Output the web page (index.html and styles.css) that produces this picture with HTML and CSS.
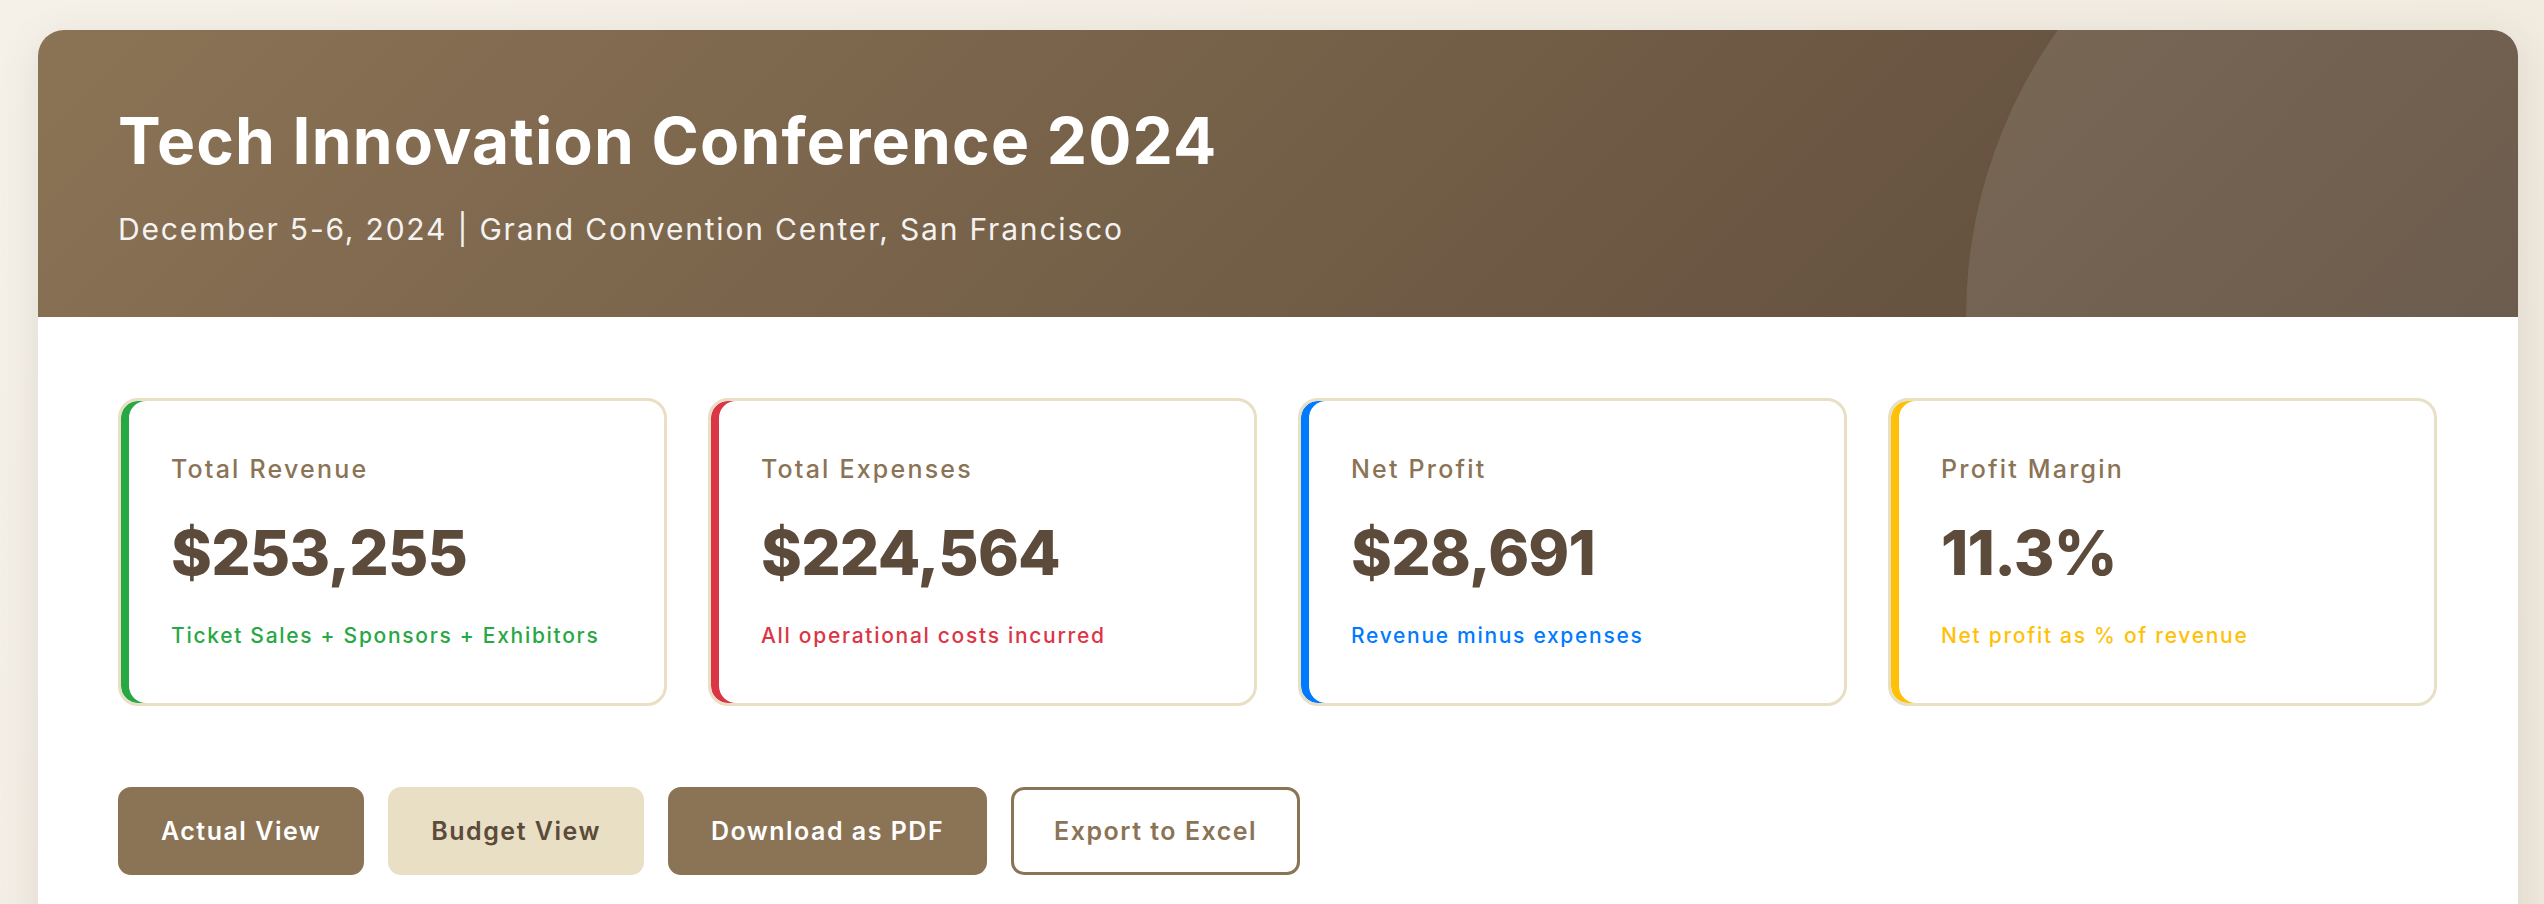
FILE: index.html
```html
<!DOCTYPE html>
<html lang="en">
<head>
    <meta charset="UTF-8">
    <meta name="viewport" content="width=device-width, initial-scale=1.0">
    <title>Tech Innovation Conference 2024 - Financial Report</title>
    <link rel="stylesheet" href="styles.css">
</head>
<body>
    <div class="container">
        <header class="header">
            <h1>Tech Innovation Conference 2024</h1>
            <p class="subtitle">December 5-6, 2024 | Grand Convention Center, San Francisco</p>
        </header>
        <main class="content">
            <div class="summary-cards">
                <div class="card revenue">
                    <div class="card-label">Total Revenue</div>
                    <div class="card-value">$253,255</div>
                    <div class="card-note">Ticket Sales + Sponsors + Exhibitors</div>
                </div>
                <div class="card expenses">
                    <div class="card-label">Total Expenses</div>
                    <div class="card-value">$224,564</div>
                    <div class="card-note">All operational costs incurred</div>
                </div>
                <div class="card profit">
                    <div class="card-label">Net Profit</div>
                    <div class="card-value">$28,691</div>
                    <div class="card-note">Revenue minus expenses</div>
                </div>
                <div class="card margin">
                    <div class="card-label">Profit Margin</div>
                    <div class="card-value">11.3%</div>
                    <div class="card-note">Net profit as % of revenue</div>
                </div>
            </div>
            <div class="actions">
                <button class="btn btn-primary">Actual View</button>
                <button class="btn btn-light">Budget View</button>
                <button class="btn btn-primary">Download as PDF</button>
                <button class="btn btn-outline">Export to Excel</button>
            </div>
        </main>
    </div>
</body>
</html>
```

FILE: styles.css
```css
* {
    box-sizing: border-box;
}
body {
    font-family: Inter, "Open Sans", sans-serif;
    background: linear-gradient(135deg, #f5f1e9 0%, #efe8dc 100%);
    margin: 0;
    padding: 30px 26px 0 38px;
    height: 904px;
    overflow: hidden;
}
.container {
    background: white;
    border-radius: 26px;
    box-shadow: 0 10px 40px rgba(92, 74, 58, 0.12);
    overflow: hidden;
    min-height: 1000px;
}
.header {
    position: relative;
    overflow: hidden;
    background: linear-gradient(135deg, #8b7355 0%, #5c4a3a 100%);
    color: white;
    padding: 63px 80px 65px;
}
.header::after {
    content: '';
    position: absolute;
    width: 988px;
    height: 988px;
    top: -207px;
    right: -436px;
    border-radius: 50%;
    background: rgba(255, 255, 255, 0.1);
}
.header h1 {
    margin: 0 0 18px;
    font-size: 64px;
    line-height: 96px;
    font-weight: 700;
    letter-spacing: 1.2px;
}
.subtitle {
    margin: 0;
    font-size: 30px;
    line-height: 45px;
    font-weight: 400;
    letter-spacing: 1.8px;
    opacity: 0.92;
}
.content {
    padding: 81px 81px 80px 80px;
}
.summary-cards {
    display: grid;
    grid-template-columns: repeat(4, 1fr);
    gap: 41px;
}
.card {
    border: 3px solid #e8dfc5;
    border-radius: 20px;
    padding: 50px 40px 52px 50px;
    background: white;
}
.card.revenue { box-shadow: inset 8px 0 0 #28a745; }
.card.expenses { box-shadow: inset 8px 0 0 #dc3545; }
.card.profit { box-shadow: inset 8px 0 0 #007bff; }
.card.margin { box-shadow: inset 8px 0 0 #ffc107; }
.card-label {
    color: #8b7355;
    font-size: 25px;
    line-height: 36px;
    font-weight: 500;
    letter-spacing: 2.2px;
    margin-bottom: 26px;
}
.card-value {
    color: #5c4a3a;
    font-size: 62px;
    line-height: 80px;
    font-weight: 800;
    letter-spacing: -0.8px;
    margin-bottom: 28px;
}
.card-note {
    font-size: 21px;
    line-height: 30px;
    font-weight: 500;
    letter-spacing: 1.7px;
}
.revenue .card-note { color: #28a745; }
.expenses .card-note { color: #dc3545; }
.profit .card-note { color: #007bff; }
.margin .card-note { color: #ffc107; }
.actions {
    display: flex;
    gap: 24px;
    margin-top: 81px;
}
.btn {
    font-family: inherit;
    font-size: 25px;
    line-height: 38px;
    font-weight: 600;
    letter-spacing: 1.5px;
    padding: 22px 40px;
    border: 3px solid transparent;
    border-radius: 13px;
    cursor: pointer;
}
.btn-primary {
    background: #8b7355;
    border-color: #8b7355;
    color: white;
}
.btn-light {
    background: #e8dfc5;
    border-color: #e8dfc5;
    color: #5c4a3a;
}
.btn-outline {
    background: white;
    border-color: #8b7355;
    color: #8b7355;
}
```
